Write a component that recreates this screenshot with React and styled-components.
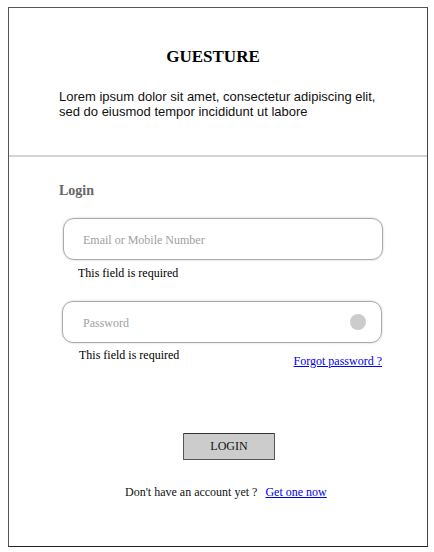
import React from 'react';
import styled, { createGlobalStyle } from 'styled-components';

const GlobalStyle = createGlobalStyle`
  html, body {
    margin: 0;
    padding: 0;
    background: #fff;
  }
  body {
    font-family: 'Liberation Serif', 'Times New Roman', serif;
  }
`;

const Frame = styled.div`
  box-sizing: border-box;
  margin: 7px 0 0 8px;
  width: 420px;
  height: 540px;
  border: 1px solid #222;
  border-top-color: #555;
  border-left-color: #555;
  border-right-color: #444;
  display: flex;
  flex-direction: column;
`;

const Header = styled.header`
  height: 149px;
  box-sizing: border-box;
  padding: 39px 0 0 50px;
  border-bottom: 2px solid #d4d4d4;
`;

const Title = styled.h1`
  margin: 0 0 0 -50px;
  padding-right: 10px;
  text-align: center;
  font-family: 'Liberation Serif', serif;
  font-weight: bold;
  font-size: 17px;
  line-height: 20px;
  color: #000;
`;

const Intro = styled.p`
  margin: 22px 0 0 0;
  font-family: 'Liberation Sans', Arial, sans-serif;
  font-size: 13px;
  line-height: 15px;
  color: #111;
`;

const Body = styled.section`
  padding: 26px 44px 0 50px;
  display: flex;
  flex-direction: column;
`;

const SectionLabel = styled.h2`
  margin: 0;
  font-size: 14px;
  line-height: 16px;
  font-weight: bold;
  color: #666;
`;

const Field = styled.div`
  margin: ${p => p.$top}px 0 0 ${p => p.$left}px;
  width: 320px;
  height: 42px;
  box-sizing: border-box;
  border: 1px solid #aaa;
  border-radius: 11px;
  box-shadow: 0 0 2px rgba(0, 0, 0, 0.25);
  display: flex;
  align-items: center;
  padding: 2px 22px 0 ${p => p.$pad}px;
`;

const Input = styled.input`
  flex: 1;
  border: none;
  outline: none;
  background: none;
  padding: 0;
  font-family: 'Liberation Serif', serif;
  font-size: 12px;
  color: #333;
  &::placeholder {
    color: #a0a0a0;
  }
`;

const Dot = styled.span`
  width: 16px;
  height: 16px;
  border-radius: 50%;
  background: #cccccc;
  margin: -2px -7px 0 0;
`;

const Hint = styled.div`
  margin: ${p => p.$top}px 0 0 ${p => p.$left}px;
  font-size: 12px;
  line-height: 14px;
  color: #000;
`;

const HintRow = styled.div`
  display: flex;
  justify-content: space-between;
  align-items: flex-start;
  width: 323px;
`;

const Link = styled.a`
  font-size: 12px;
  line-height: 14px;
  color: #0000ee;
  text-decoration: underline;
  cursor: pointer;
  margin-top: ${p => p.$top || 0}px;
`;

const Button = styled.button`
  align-self: flex-start;
  margin: 65px 0 0 124px;
  width: 92px;
  height: 27px;
  background: #cccccc;
  border: 1px solid #555;
  border-top-color: #333;
  border-radius: 1px;
  font-family: 'Liberation Serif', serif;
  font-size: 12px;
  color: #111;
  padding: 0;
`;

const Footer = styled.div`
  display: flex;
  align-items: baseline;
  margin: 25px 0 0 66px;
  font-size: 12px;
  color: #111;
  gap: 8px;
`;

export default function App() {
  return (
    <>
      <GlobalStyle />
      <Frame>
        <Header>
          <Title>GUESTURE</Title>
          <Intro>
            Lorem ipsum dolor sit amet, consectetur adipiscing elit,
            <br />
            sed do eiusmod tempor incididunt ut labore
          </Intro>
        </Header>
        <Body>
          <SectionLabel>Login</SectionLabel>
          <Field $top={19} $left={4} $pad={19}>
            <Input placeholder="Email or Mobile Number" />
          </Field>
          <Hint $top={6} $left={19}>This field is required</Hint>
          <Field $top={21} $left={3} $pad={20}>
            <Input placeholder="Password" type="password" />
            <Dot />
          </Field>
          <HintRow>
            <Hint $top={5} $left={20}>This field is required</Hint>
            <Link $top={11}>Forgot password ?</Link>
          </HintRow>
          <Button>LOGIN</Button>
          <Footer>
            <span>Don't have an account yet ?</span>
            <Link>Get one now</Link>
          </Footer>
        </Body>
      </Frame>
    </>
  );
}
